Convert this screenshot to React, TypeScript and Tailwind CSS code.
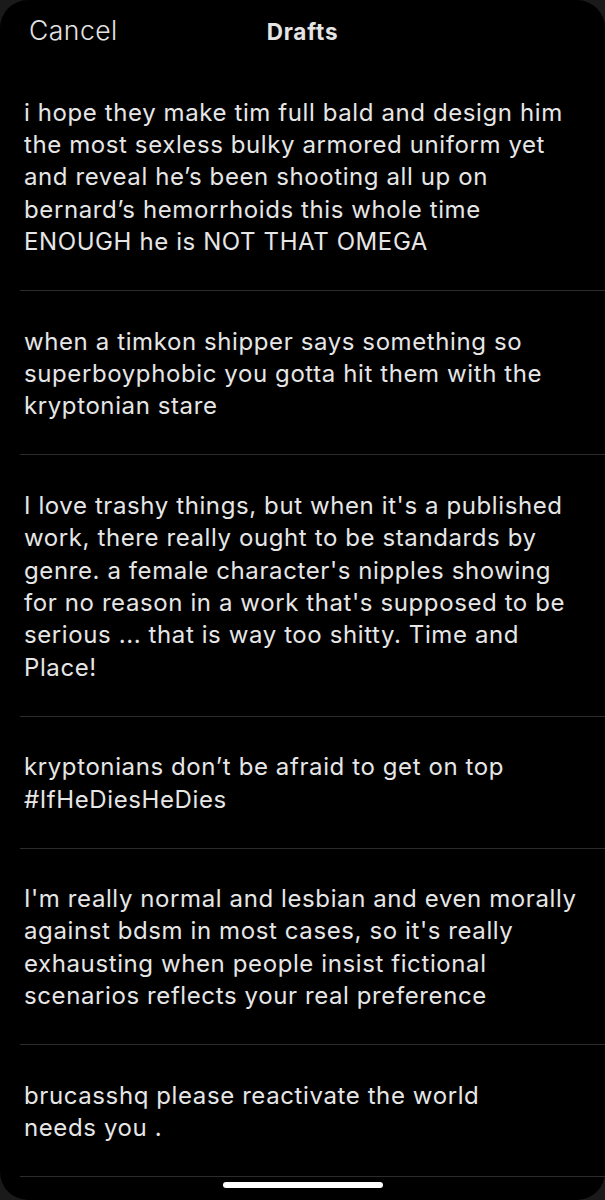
import React from "react";

const drafts: string[][] = [
  [
    "i hope they make tim full bald and design him",
    "the most sexless bulky armored uniform yet",
    "and reveal he\u2019s been shooting all up on",
    "bernard\u2019s hemorrhoids this whole time",
    "ENOUGH he is NOT THAT OMEGA",
  ],
  [
    "when a timkon shipper says something so",
    "superboyphobic you gotta hit them with the",
    "kryptonian stare",
  ],
  [
    "I love trashy things, but when it's a published",
    "work, there really ought to be standards by",
    "genre. a female character's nipples showing",
    "for no reason in a work that's supposed to be",
    "serious ... that is way too shitty. Time and",
    "Place!",
  ],
  ["kryptonians don\u2019t be afraid to get on top", "#IfHeDiesHeDies"],
  [
    "I'm really normal and lesbian and even morally",
    "against bdsm in most cases, so it's really",
    "exhausting when people insist fictional",
    "scenarios reflects your real preference",
  ],
  ["brucasshq please reactivate the world", "needs you ."],
];

export default function App() {
  return (
    <div className="w-[605px] h-[1200px] bg-[#1a1a1a] overflow-hidden font-['Inter',sans-serif]">
      <div className="relative h-full bg-black rounded-[28px] flex flex-col">
        <div className="h-[62px] grid grid-cols-3 items-center shrink-0">
          <div className="pl-[29px] pb-[2px] text-[26.5px] font-light text-[#e4e4e4] leading-none tracking-[0.5px]">
            Cancel
          </div>
          <div className="text-center pt-[2px] text-[22.5px] font-bold text-[#e4e4e4] leading-none tracking-[0.8px]">
            Drafts
          </div>
          <div />
        </div>
        <div className="flex flex-col">
          {drafts.map((lines, i) => (
            <div key={i} className="ml-[20px] border-b border-[#2c2c2e] pl-[4px] pt-[34.5px] pb-[31.5px]">
              {lines.map((l, j) => (
                <div
                  key={j}
                  className="whitespace-nowrap text-[24px] leading-[32.4px] text-[#e6e6e6] font-normal tracking-[0.6px]"
                >
                  {l}
                </div>
              ))}
            </div>
          ))}
        </div>
        <div className="absolute left-1/2 -translate-x-1/2 bottom-[12px] w-[160px] h-[6px] rounded-full bg-white" />
      </div>
    </div>
  );
}
